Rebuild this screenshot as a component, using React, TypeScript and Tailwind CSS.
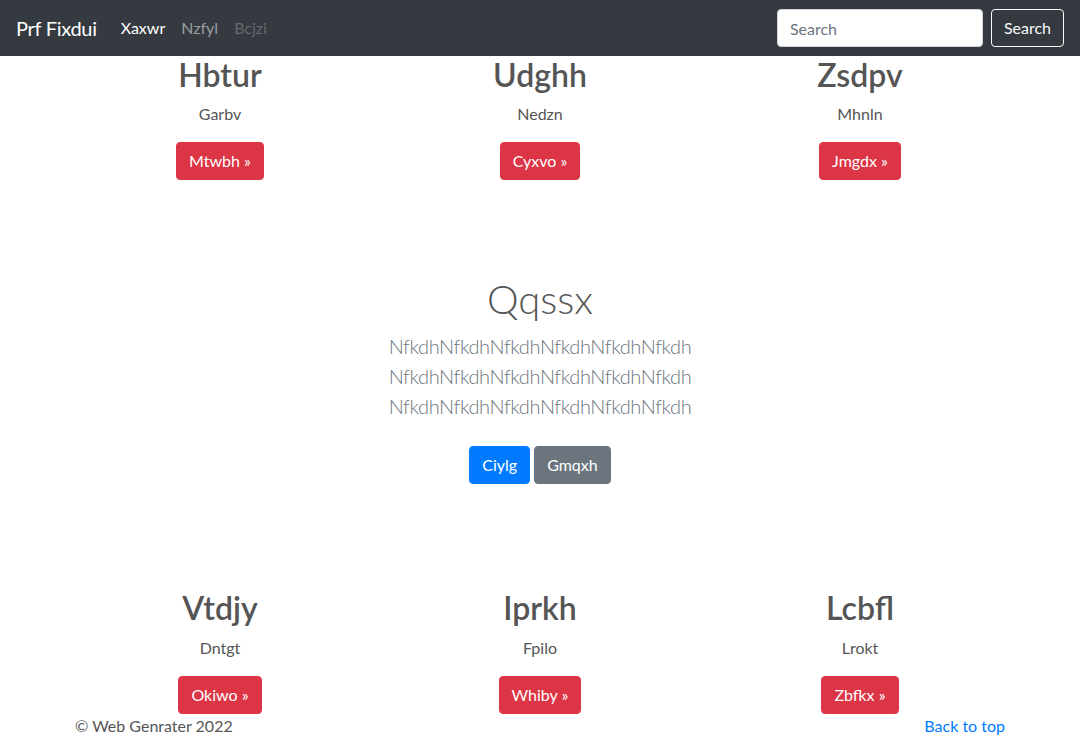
import React from "react";

const font = "font-['Lato','Segoe_UI','Open_Sans',sans-serif]";

const topCards = [
  { title: "Hbtur", text: "Garbv", btn: "Mtwbh" },
  { title: "Udghh", text: "Nedzn", btn: "Cyxvo" },
  { title: "Zsdpv", text: "Mhnln", btn: "Jmgdx" },
];

const bottomCards = [
  { title: "Vtdjy", text: "Dntgt", btn: "Okiwo" },
  { title: "Iprkh", text: "Fpilo", btn: "Whiby" },
  { title: "Lcbfl", text: "Lrokt", btn: "Zbfkx" },
];

type Card = { title: string; text: string; btn: string };

const CardRow = ({ cards }: { cards: Card[] }) => (
  <div className="grid grid-cols-3 -mx-[15px]">
    {cards.map((c) => (
      <div key={c.title} className="px-[15px] text-center">
        <h2 className="text-[32px] leading-[1.2] font-semibold mb-2 text-[#555]">{c.title}</h2>
        <p className="text-base leading-6 mb-4 text-[#555]">{c.text}</p>
        <a
          href="#"
          className="inline-block px-3 py-1.5 text-base leading-6 border border-[#dc3545] bg-[#dc3545] text-white rounded"
        >
          {c.btn} »
        </a>
      </div>
    ))}
  </div>
);

export default function App() {
  const lead = "NfkdhNfkdhNfkdhNfkdhNfkdhNfkdh";
  return (
    <div className={`${font} min-h-screen bg-white text-[#555]`}>
      <nav className="h-14 bg-[#343a40] flex items-center px-4">
        <a href="#" className="text-xl text-white mr-4 leading-[30px] tracking-[-0.3px]">Prf Fixdui</a>
        <div className="flex items-center">
          <a href="#" className="px-2 text-base text-white">Xaxwr</a>
          <a href="#" className="px-2 text-base text-white/50">Nzfyl</a>
          <span className="px-2 text-base text-white/25">Bcjzi</span>
        </div>
        <form className="ml-auto flex items-center">
          <input
            placeholder="Search"
            className="w-[206px] h-[38px] px-3 rounded bg-white border border-[#ced4da] text-base text-[#495057] placeholder:text-[#6c757d] outline-none mr-2"
          />
          <button
            type="button"
            className="h-[38px] px-3 rounded border border-[#f8f9fa] text-[#f8f9fa] text-base"
          >
            Search
          </button>
        </form>
      </nav>

      <main className="w-[960px] mx-auto px-[15px]">
        <CardRow cards={topCards} />

        <section className="text-center pt-[95px] pb-[105px]">
          <h1 className="text-[40px] leading-[1.2] font-light mb-2 text-[#555]">Qqssx</h1>
          <div className="w-[450px] mx-auto mb-4 text-xl leading-[30px] font-light text-[#6c757d] tracking-[-0.4px]">
            <div>{lead}</div>
            <div>{lead}</div>
            <div>{lead}</div>
          </div>
          <div className="flex justify-center gap-1 pt-[9px]">
            <a href="#" className="inline-block px-3 py-1.5 text-base leading-6 border border-[#007bff] bg-[#007bff] text-white rounded">
              Ciylg
            </a>
            <a href="#" className="inline-block px-3 py-1.5 text-base leading-6 border border-[#6c757d] bg-[#6c757d] text-white rounded">
              Gmqxh
            </a>
          </div>
        </section>

        <CardRow cards={bottomCards} />

        <footer className="flex justify-between text-base leading-6">
          <p className="text-[#555]">© Web Genrater 2022</p>
          <a href="#" className="text-[#007bff]">Back to top</a>
        </footer>
      </main>
    </div>
  );
}
